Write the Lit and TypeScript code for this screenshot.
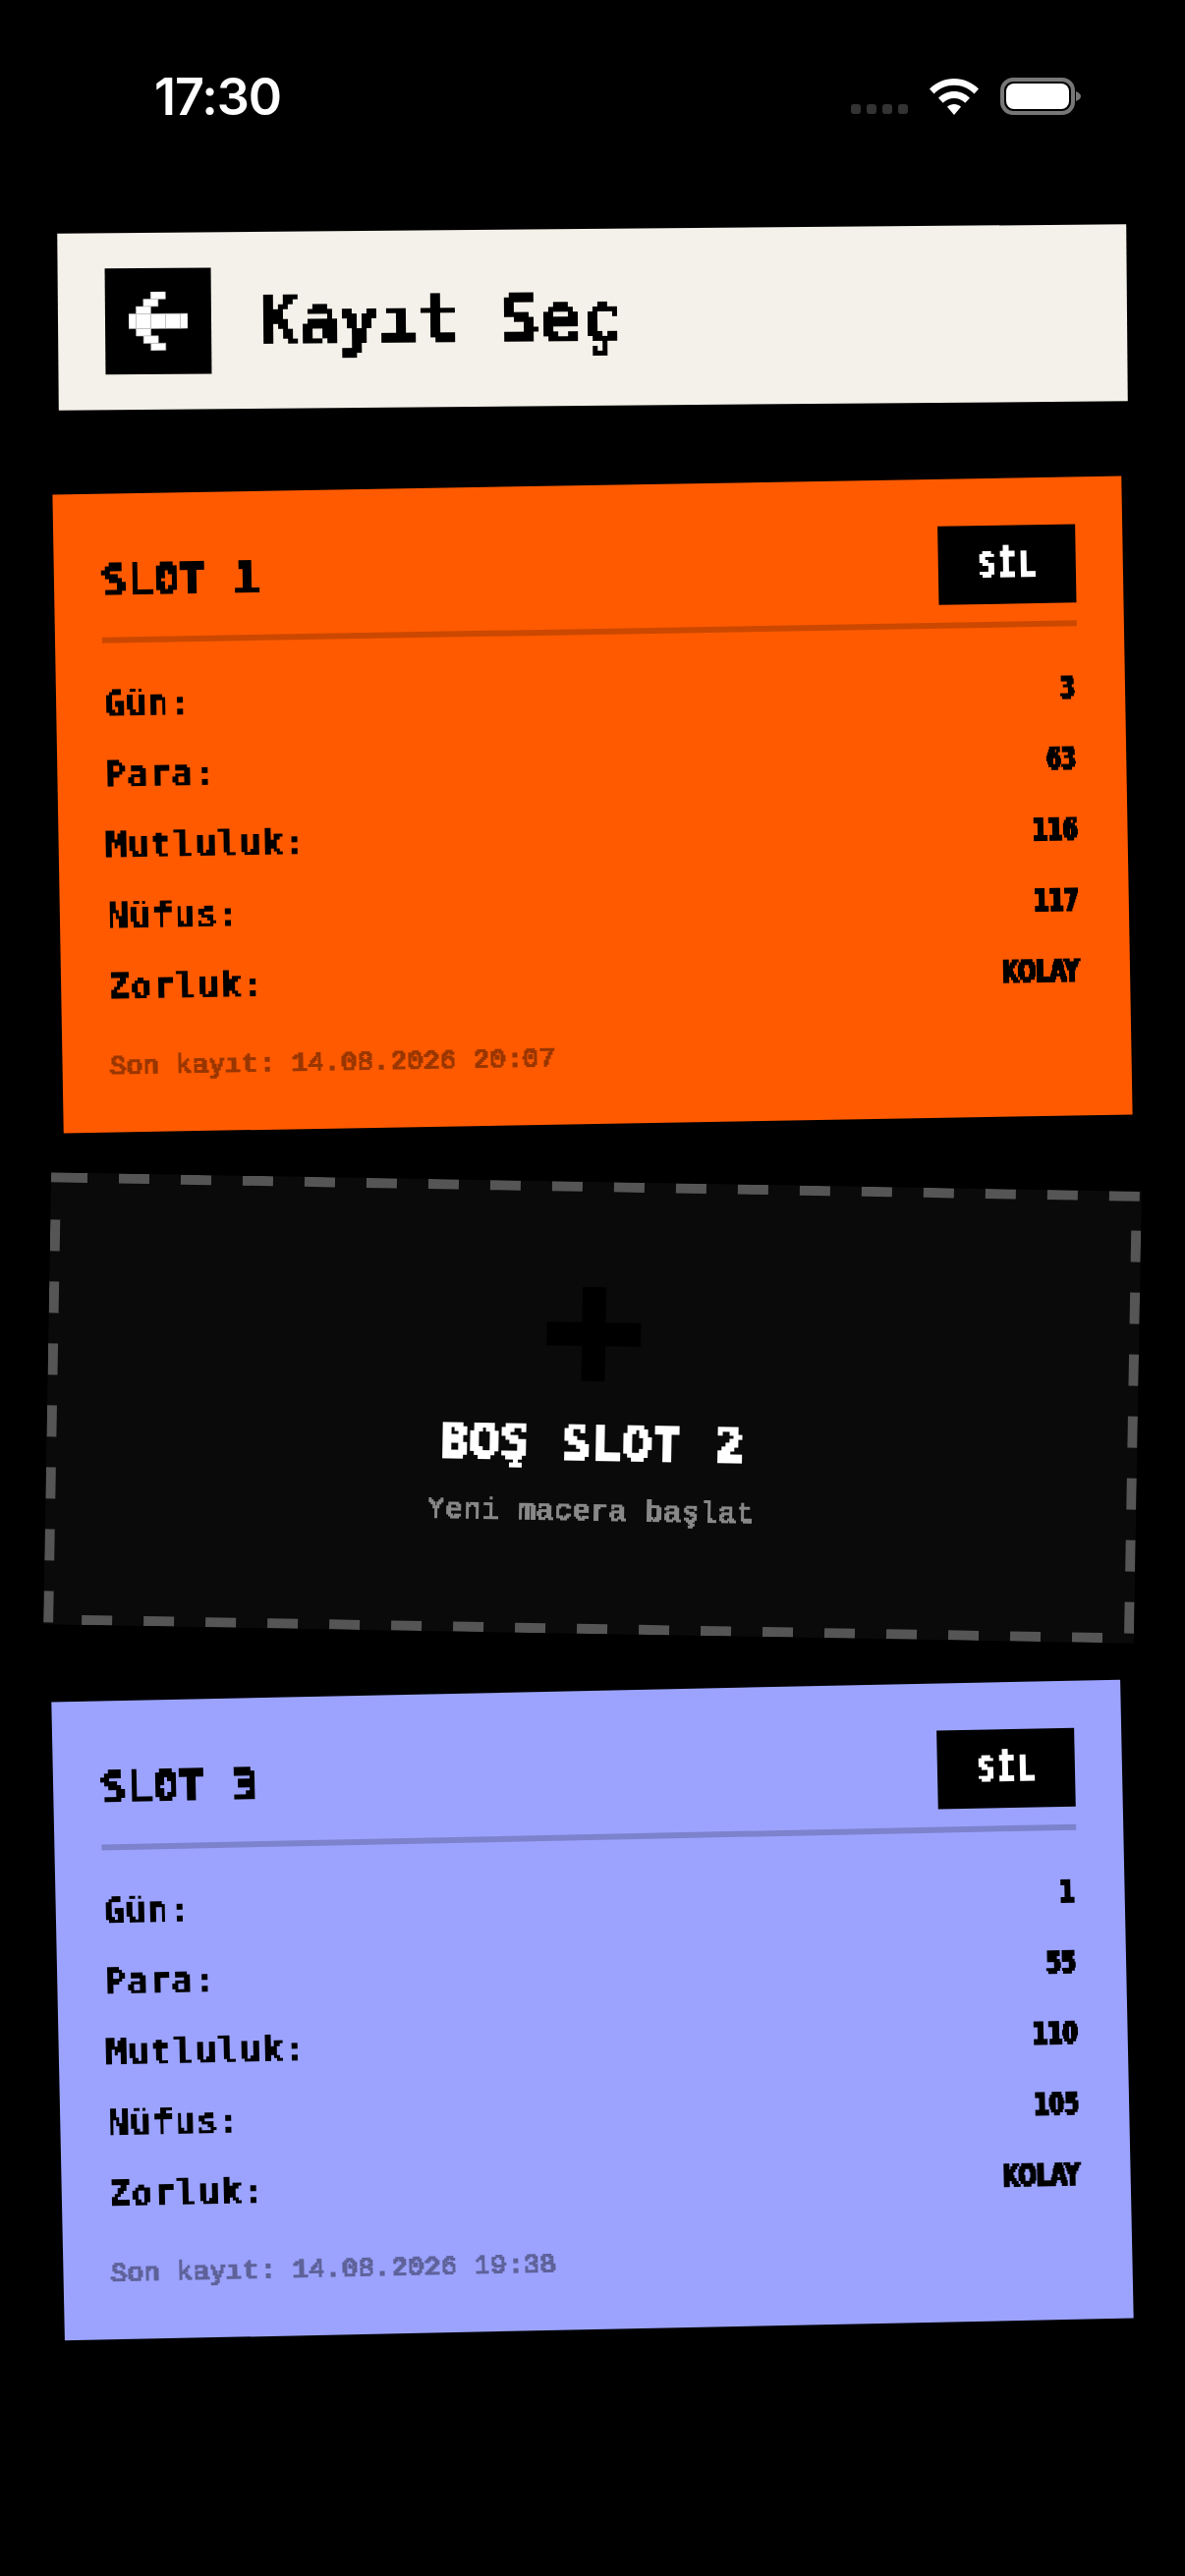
import { LitElement, html, css, svg } from 'lit';
import { customElement } from 'lit/decorators.js';

interface SaveSlot {
  title: string;
  tone: string;
  angle: number;
  stats: [string, string][];
  saved: string;
}

const SLOT_ONE: SaveSlot = {
  title: 'SLOT 1',
  tone: 'orange',
  angle: -1,
  stats: [
    ['Gün:', '3'],
    ['Para:', '63'],
    ['Mutluluk:', '116'],
    ['Nüfus:', '117'],
    ['Zorluk:', 'KOLAY'],
  ],
  saved: 'Son kayıt: 14.08.2026 20:07',
};

const SLOT_THREE: SaveSlot = {
  title: 'SLOT 3',
  tone: 'violet',
  angle: -1.2,
  stats: [
    ['Gün:', '1'],
    ['Para:', '55'],
    ['Mutluluk:', '110'],
    ['Nüfus:', '105'],
    ['Zorluk:', 'KOLAY'],
  ],
  saved: 'Son kayıt: 14.08.2026 19:38',
};

// x, y, w, h on an 8x8 grid
const ARROW_CELLS = [
  [3, 0, 2, 1],
  [2, 1, 2, 1],
  [1, 2, 2, 1],
  [0, 3, 1, 2],
  [1, 3, 2, 2],
  [3, 3, 2, 2],
  [5, 3, 2, 2],
  [7, 3, 1, 2],
  [1, 5, 2, 1],
  [2, 6, 2, 1],
  [3, 7, 2, 1],
];

@customElement('app-root')
export class AppRoot extends LitElement {
  static styles = css`
    :host {
      display: block;
      width: 1206px;
      height: 2622px;
      background: #000;
      overflow: hidden;
      font-family: 'DejaVu Sans Mono', monospace;
    }

    .filters {
      position: absolute;
      width: 0;
      height: 0;
    }

    .px2 {
      filter: url(#p2);
    }

    .px3 {
      filter: url(#p3);
    }

    .px4 {
      filter: url(#p4);
    }

    .px5 {
      filter: url(#p5);
    }

    .status {
      display: flex;
      align-items: center;
      justify-content: space-between;
      height: 56px;
      padding: 70px 106px 0 157px;
      color: #fff;
    }

    .time {
      font-family: Inter, sans-serif;
      font-size: 52px;
      font-weight: 600;
      letter-spacing: -1px;
    }

    .status-icons {
      display: flex;
      align-items: flex-end;
      gap: 22px;
    }

    .dots {
      display: flex;
      gap: 6px;
      padding-bottom: 1px;
    }

    .dots span {
      width: 10px;
      height: 10px;
      border-radius: 3px;
      background: #333;
    }

    .page {
      display: flex;
      flex-direction: column;
      align-items: center;
      padding-top: 107px;
    }

    .top {
      display: flex;
      align-items: center;
      gap: 48px;
      box-sizing: border-box;
      width: 1088px;
      height: 180px;
      margin-bottom: 81px;
      padding: 0 48px;
      background: #f4f1ea;
      color: #000;
      transform: rotate(-0.5deg);
    }

    .back {
      display: flex;
      align-items: center;
      justify-content: center;
      width: 108px;
      height: 108px;
      background: #000;
    }

    .heading {
      font-size: 68px;
      font-weight: 700;
      line-height: 90px;
      padding-top: 2px;
    }

    .slot {
      box-sizing: border-box;
      width: 1088px;
      height: 650px;
      margin-bottom: 59px;
      padding: 48px 48px 0;
      color: #000;
    }

    .slot.orange {
      background: #ff5a00;
    }

    .slot.violet {
      background: #9ca3ff;
    }

    .slot-head {
      display: flex;
      align-items: center;
      justify-content: space-between;
      height: 80px;
      padding-bottom: 18px;
      border-bottom: 6px solid rgba(0, 0, 0, 0.2);
    }

    .slot-title {
      font-size: 43px;
      font-weight: 700;
      line-height: 60px;
      letter-spacing: 1px;
    }

    .delete {
      display: flex;
      align-items: center;
      justify-content: center;
      width: 140px;
      height: 80px;
      background: #000;
      color: #fff;
      font-size: 34px;
      font-weight: 700;
    }

    .stats {
      display: grid;
      row-gap: 24px;
      margin-top: 38px;
    }

    .stat {
      display: flex;
      justify-content: space-between;
      height: 48px;
    }

    .label {
      font-size: 36px;
      font-weight: 700;
      line-height: 48px;
      letter-spacing: 1px;
    }

    .value {
      font-family: 'DejaVu Sans', sans-serif;
      font-stretch: condensed;
      font-size: 32px;
      font-weight: 700;
      line-height: 48px;
      margin-right: 3px;
      transform: scaleX(0.76);
      transform-origin: right center;
    }

    .saved {
      margin-top: 38px;
      font-family: 'Liberation Mono', monospace;
      font-size: 28px;
      line-height: 40px;
    }

    .orange .saved {
      color: #993600;
    }

    .violet .saved {
      color: #5e6299;
    }

    .empty {
      position: relative;
      display: flex;
      flex-direction: column;
      align-items: center;
      box-sizing: border-box;
      width: 1110px;
      height: 460px;
      margin-bottom: 58px;
      padding-top: 107px;
      background-color: #0a0a0a;
      transform: rotate(1deg);
    }

    .dashes {
      position: absolute;
      inset: 0;
    }

    .plus {
      display: block;
      margin-bottom: 32px;
    }

    .empty-title {
      color: #fff;
      font-size: 50px;
      font-weight: 700;
      line-height: 62px;
      letter-spacing: 1px;
    }

    .empty-note {
      margin-top: 19px;
      color: #888;
      font-family: 'Liberation Mono', monospace;
      font-size: 30px;
      line-height: 40px;
      letter-spacing: 0.5px;
    }
  `;

  private renderFilter(id: string, size: number, at: number, radius: number) {
    return svg`
      <filter id=${id} x="0" y="0" width="1" height="1" color-interpolation-filters="sRGB">
        <feFlood x=${at} y=${at} width="1" height="1" />
        <feComposite x="0" y="0" width=${size} height=${size} />
        <feTile result="grid" />
        <feComposite in="SourceGraphic" in2="grid" operator="in" />
        <feComponentTransfer>
          <feFuncA type="discrete" tableValues="0 1 1 1" />
        </feComponentTransfer>
        <feMorphology operator="dilate" radius=${radius} />
      </filter>
    `;
  }

  private renderDashes() {
    const w = 1110;
    const h = 460;
    const t = 10;
    const rects: unknown[] = [];
    const rect = (x: number, y: number, rw: number, rh: number) =>
      rects.push(svg`<rect x=${x} y=${y} width=${rw} height=${rh} fill="#555" />`);

    rect(0, 0, 37, t);
    for (let x = 69; x < w - 20; x += 63) rect(x, 0, 31, t);
    for (let y = 48; y < h - 30; y += 63) rect(0, y, t, 32);
    for (let y = 40; y < h - 30; y += 63) rect(w - t, y, t, 32);
    for (let x = 39; x < w - 30; x += 63) rect(x, h - t, 31, t);

    return html`<svg class="dashes" width=${w} height=${h} viewBox="0 0 ${w} ${h}">${rects}</svg>`;
  }

  private renderSlot(slot: SaveSlot) {
    return html`
      <section class="slot ${slot.tone}" style="transform: rotate(${slot.angle}deg)">
        <div class="slot-head">
          <div class="slot-title px4">${slot.title}</div>
          <div class="delete"><span class="px3">SİL</span></div>
        </div>
        <div class="stats">
          ${slot.stats.map(
            ([label, value]) => html`
              <div class="stat">
                <span class="label px3">${label}</span>
                <span class="value px3">${value}</span>
              </div>
            `,
          )}
        </div>
        <div class="saved px2">${slot.saved}</div>
      </section>
    `;
  }

  render() {
    return html`
      <svg class="filters" aria-hidden="true">
        ${this.renderFilter('p2', 2, 1, 1)} ${this.renderFilter('p3', 3, 1, 1)}
        ${this.renderFilter('p4', 4, 2, 2)} ${this.renderFilter('p5', 5, 2, 2)}
      </svg>

      <div class="status">
        <span class="time">17:30</span>
        <div class="status-icons">
          <div class="dots"><span></span><span></span><span></span><span></span></div>
          <svg width="50" height="37" viewBox="0 0 50 37" fill="#fff">
            <path d="M25 0C15.500 0 7 3.700 0 10.500L4.500 15.500C10 10 17 6.800 25 6.800S40 10 45.500 15.500L50 10.500C43 3.700 34.500 0 25 0Z" />
            <path d="M25 13C19 13 13.500 15.400 9 19.700L13.700 24.700C16.800 21.800 20.700 20 25 20S33.200 21.800 36.300 24.700L41 19.700C36.500 15.400 31 13 25 13Z" />
            <path d="M25 26C22.500 26 20 27 18 28.800L25 37L32 28.800C30 27 27.500 26 25 26Z" />
          </svg>
          <svg width="82" height="38" viewBox="0 0 82 38">
            <rect x="2" y="2" width="72" height="34" rx="11" fill="none" stroke="#777" stroke-width="4" />
            <rect x="6" y="6" width="64" height="26" rx="8" fill="#fff" />
            <path d="M77 14C80 15 82 17 82 19S80 23 77 24Z" fill="#777" />
          </svg>
        </div>
      </div>

      <div class="page">
        <header class="top">
          <div class="back">
            <svg width="60" height="60" viewBox="0 0 8 8">
              ${ARROW_CELLS.map(
                ([x, y, w, h]) =>
                  svg`<rect x=${x} y=${y} width=${w} height=${h} fill="#fff" stroke="#bbb" stroke-width="0.08" />`,
              )}
            </svg>
          </div>
          <div class="heading px5">Kayıt Seç</div>
        </header>

        ${this.renderSlot(SLOT_ONE)}

        <section class="empty">
          ${this.renderDashes()}
          <svg class="plus" width="96" height="96" viewBox="0 0 4 4">
            <path d="M1.500 0H2.500V1.500H4V2.500H2.500V4H1.500V2.500H0V1.500H1.500Z" fill="#000" />
          </svg>
          <div class="empty-title px4">BOŞ SLOT 2</div>
          <div class="empty-note px2">Yeni macera başlat</div>
        </section>

        ${this.renderSlot(SLOT_THREE)}
      </div>
    `;
  }
}
